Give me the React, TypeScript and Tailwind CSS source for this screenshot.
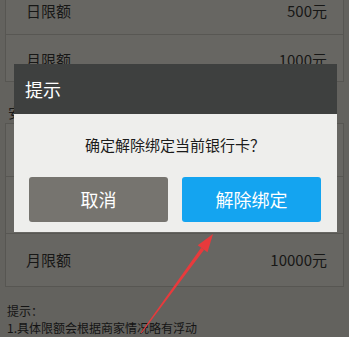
const font = { fontFamily: '"Noto Sans CJK SC", "Noto Sans", sans-serif' };

const Row = ({ label, value, className }: { label: string; value: string; className: string }) => (
	<div className={`flex items-center justify-between pl-[20px] pr-[16px] text-[15px] leading-[18px] text-[#171716] ${className}`}>
		<span>{label}</span>
		<span>{value}</span>
	</div>
);

export default function App() {
	return (
		<div className="relative w-[349px] h-[337px] overflow-hidden bg-[#63625e]" style={font}>
			{/* page behind the dim */}
			<div className="mx-[5px] -mt-[15px] border border-[#575652] bg-[#676662]">
				<Row label="日限额" value="500元" className="h-[49px] pt-[1px] border-b border-[#585753]" />
				<Row label="月限额" value="1000元" className="h-[46px] pt-[4px]" />
			</div>
			<div className="h-[41px] pl-[8px] pt-[21px] text-[14px] leading-[18px] text-[#171716]">安全设置</div>
			<div className="mx-[5px] border border-[#575652] bg-[#676662]">
				<div className="h-[53px] border-b border-[#585753]" />
				<div className="h-[57px] border-b border-[#585753]" />
				<Row label="月限额" value="10000元" className="h-[52px]" />
			</div>
			<div className="pl-[7px] pt-[15px] text-[12px] leading-[17px] text-[#141414]">
				<div>提示：</div>
				<div>1.具体限额会根据商家情况略有浮动</div>
			</div>

			{/* dialog */}
			<div className="absolute left-[14px] top-[64px] w-[323px]">
				<div className="flex h-[50px] items-center bg-[#3e403f] pl-[11px] text-[18px] text-white">提示</div>
				<div className="bg-[#eeeeec] pb-[10px] pl-[15px] pr-[16px]">
					<div className="flex h-[63px] items-center justify-center text-[15px] text-[#1b1b1b]">
						确定解除绑定当前银行卡？
					</div>
					<div className="flex gap-[14px]">
						<button className="flex h-[45px] flex-1 items-center justify-center rounded-[3px] bg-[#76746f] text-[18px] text-white">
							取消
						</button>
						<button className="flex h-[45px] flex-1 items-center justify-center rounded-[3px] bg-[#14a4f0] text-[18px] text-white">
							解除绑定
						</button>
					</div>
				</div>
			</div>

			{/* red arrow */}
			<svg className="absolute inset-0" width="349" height="337" viewBox="0 0 349 337">
				<polygon points="141.6,333.3 140.8,332.7 201.1,247.7 204.1,249.7" fill="#e83a3c" />
				<polygon points="213,234 207.5,252.2 197.7,245.2" fill="#e83a3c" />
			</svg>
		</div>
	);
}
